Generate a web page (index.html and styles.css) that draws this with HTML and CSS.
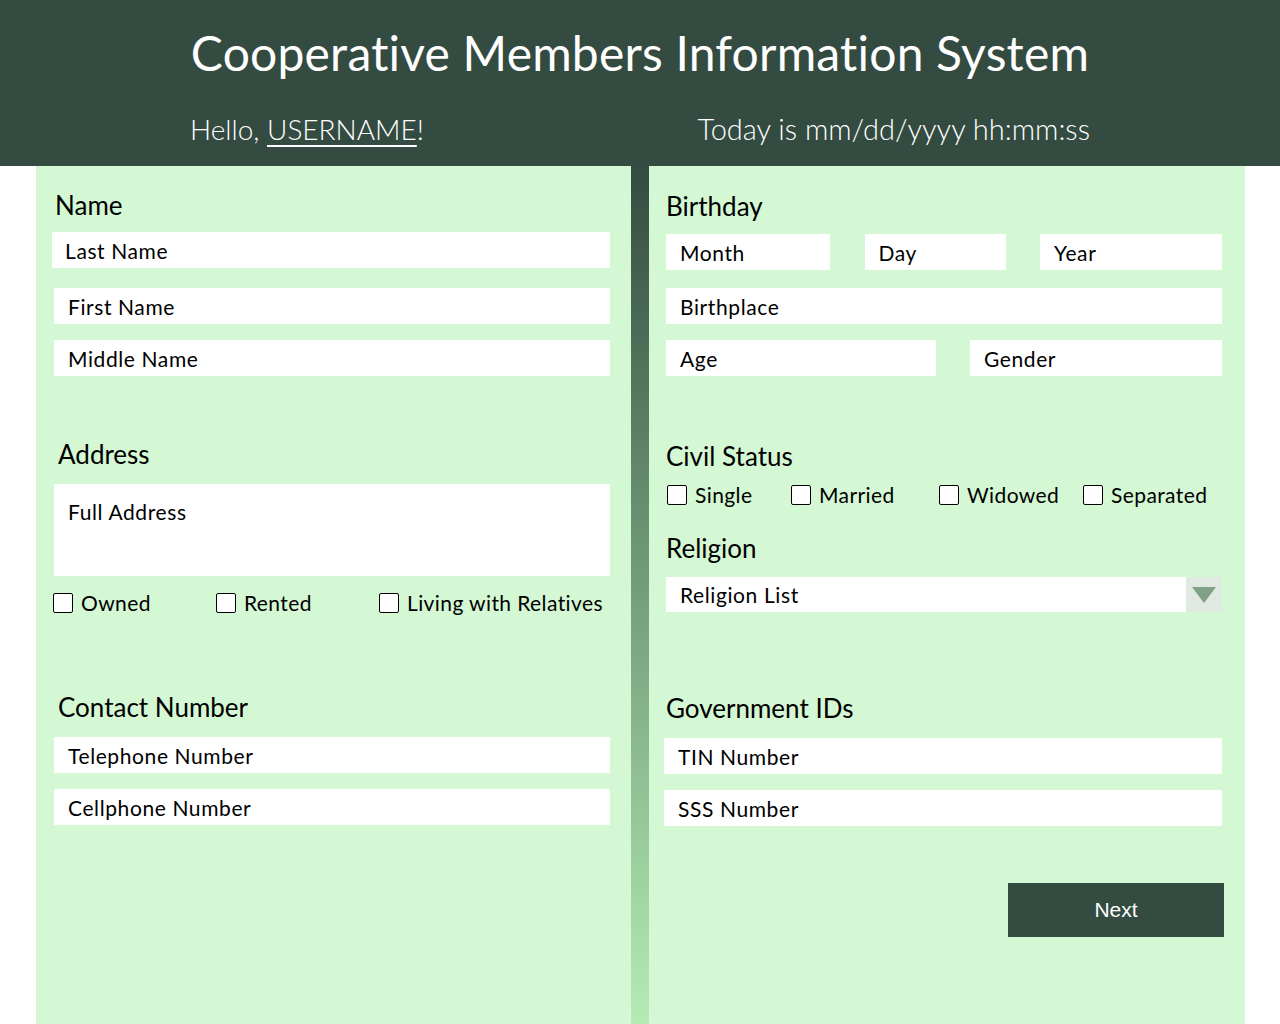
FILE: index.html
```html
<!DOCTYPE html>
<html lang="en">
<head>
<meta charset="utf-8">
<title>Cooperative Members Information System</title>
<link rel="stylesheet" href="styles.css">
</head>
<body>
<header class="top">
  <div class="top-inner">
    <h1 class="title">Cooperative Members Information System</h1>
    <div class="greet-row">
      <span class="greet">Hello, <a class="user" href="#">USERNAME</a>!</span>
      <span class="today">Today is mm/dd/yyyy hh:mm:ss</span>
    </div>
  </div>
</header>
<main class="main">
  <section class="panel panel-left">
    <h2 class="label l-name">Name</h2>
    <input class="field f-last" placeholder="Last Name">
    <input class="field f-first" placeholder="First Name">
    <input class="field f-middle" placeholder="Middle Name">

    <h2 class="label l-address">Address</h2>
    <textarea class="field area" placeholder="Full Address"></textarea>
    <div class="checks checks-addr">
      <label class="check c-owned"><span class="box"></span>Owned</label>
      <label class="check c-rented"><span class="box"></span>Rented</label>
      <label class="check"><span class="box"></span>Living with Relatives</label>
    </div>

    <h2 class="label l-contact">Contact Number</h2>
    <input class="field f-tel" placeholder="Telephone Number">
    <input class="field f-cell" placeholder="Cellphone Number">
  </section>
  <div class="divider"></div>
  <section class="panel panel-right">
    <h2 class="label l-birthday">Birthday</h2>
    <div class="row3">
      <input class="field" placeholder="Month">
      <input class="field" placeholder="Day">
      <input class="field" placeholder="Year">
    </div>
    <input class="field f-birthplace" placeholder="Birthplace">
    <div class="row2">
      <input class="field" placeholder="Age">
      <input class="field" placeholder="Gender">
    </div>

    <h2 class="label l-civil">Civil Status</h2>
    <div class="checks checks-civil">
      <label class="check c-single"><span class="box"></span>Single</label>
      <label class="check c-married"><span class="box"></span>Married</label>
      <label class="check c-widowed"><span class="box"></span>Widowed</label>
      <label class="check"><span class="box"></span>Separated</label>
    </div>

    <h2 class="label l-religion">Religion</h2>
    <div class="select">
      <span class="select-text">Religion List</span>
      <span class="select-btn"><svg width="24" height="16" viewBox="0 0 24 16"><polygon points="0,0 24,0 12,16" fill="#7ea283"/></svg></span>
    </div>

    <h2 class="label l-gov">Government IDs</h2>
    <input class="field f-tin" placeholder="TIN Number">
    <input class="field f-sss" placeholder="SSS Number">

    <div class="actions">
      <button class="next" type="button">Next</button>
    </div>
  </section>
</main>
</body>
</html>
```

FILE: styles.css
```css
* { box-sizing: border-box; }
html, body { margin: 0; padding: 0; }
body {
  background: #ffffff;
  font-family: "Lato", "Open Sans", sans-serif;
  color: #000;
  width: 1280px;
  height: 1024px;
  overflow: hidden;
}

.top {
  background: #334b40;
  height: 166px;
  color: #fff;
}
.top-inner {
  width: 904px;
  margin: 0 auto;
  padding-top: 24px;
}
.title {
  margin: 0;
  font-weight: 400;
  font-size: 48px;
  line-height: 58px;
  text-align: center;
  letter-spacing: 0.2px;
}
.greet-row {
  margin-top: 29px;
  display: flex;
  justify-content: space-between;
  align-items: baseline;
  padding: 0 0 0 2px;
  font-size: 28px;
  line-height: 36px;
  font-weight: 300;
}
.today { font-size: 29px; padding-right: 2px; }
.user { color: #fff; text-decoration: underline; text-underline-offset: 5px; text-decoration-thickness: 2px; }

.main {
  display: flex;
  margin-left: 36px;
  height: 858px;
}
.panel {
  background: #d4f7d4;
  display: flex;
  flex-direction: column;
  align-items: stretch;
}
.panel-left { width: 595px; padding: 24px 21px 0 18px; }
.panel-right { width: 596px; padding: 25px 23px 0 17px; }
.divider {
  width: 18px;
  background: linear-gradient(to bottom, #334b40 0%, #6e9775 45%, #b4ecb4 100%);
}

.label {
  margin: 0;
  font-weight: 400;
  font-size: 26px;
  line-height: 30px;
}

.field {
  display: block;
  width: 100%;
  height: 36px;
  border: none;
  outline: none;
  background: #fff;
  padding: 0 14px;
  font-family: inherit;
  font-size: 21px;
  letter-spacing: 0.6px;
  color: #000;
}
.field::placeholder { color: #000; opacity: 1; }

/* left panel spacing */
.l-name { margin-left: 1px; }
.f-last { margin-top: 12px; margin-left: -2px; width: calc(100% + 2px); padding-left: 13px; }
.f-first { margin-top: 20px; }
.f-middle { margin-top: 16px; }
.l-address { margin-top: 63px; margin-left: 4px; }
.area {
  margin-top: 15px;
  height: 92px;
  padding-top: 15px;
  resize: none;
  line-height: 26px;
}
.checks { display: flex; align-items: center; height: 24px; }
.checks-addr { margin-top: 15px; margin-left: -1px; }
.check {
  display: flex;
  align-items: center;
  font-size: 21px;
  letter-spacing: 0.4px;
  line-height: 24px;
}
.box {
  width: 20px;
  height: 20px;
  border: 1px solid #000;
  border-radius: 2px;
  background: #fff;
  margin-right: 8px;
}
.c-owned { width: 163px; }
.c-rented { width: 163px; }
.l-contact { margin-top: 77px; margin-left: 4px; }
.f-tel { margin-top: 15px; }
.f-cell { margin-top: 16px; }

/* right panel */
.row3 {
  margin-top: 13px;
  display: grid;
  grid-template-columns: 164px 141px 182px;
  justify-content: space-between;
}
.f-birthplace { margin-top: 18px; }
.row2 {
  margin-top: 16px;
  display: grid;
  grid-template-columns: 270px 252px;
  justify-content: space-between;
}
.l-civil { margin-top: 65px; }
.checks-civil { margin-top: 12px; margin-left: 1px; }
.c-single { width: 124px; }
.c-married { width: 148px; }
.c-widowed { width: 144px; }
.l-religion { margin-top: 26px; }
.select {
  margin-top: 14px;
  height: 35px;
  background: #fff;
  display: flex;
  align-items: center;
  justify-content: space-between;
}
.select-text { padding-left: 14px; font-size: 21px; letter-spacing: 0.6px; }
.select-btn {
  width: 36px;
  height: 35px;
  background: #e1e9e3;
  display: flex;
  align-items: center;
  justify-content: center;
}
.l-gov { margin-top: 81px; }
.f-tin { margin-top: 15px; margin-left: -2px; width: calc(100% + 2px); }
.f-sss { margin-top: 16px; margin-left: -2px; width: calc(100% + 2px); }
.actions {
  margin-top: 57px;
  display: flex;
  justify-content: flex-end;
  margin-right: -2px;
}
.next {
  width: 216px;
  height: 54px;
  border: none;
  background: #334b40;
  color: #fff;
  font-family: "Liberation Sans", Arial, sans-serif;
  font-size: 21px;
  cursor: pointer;
}
```
